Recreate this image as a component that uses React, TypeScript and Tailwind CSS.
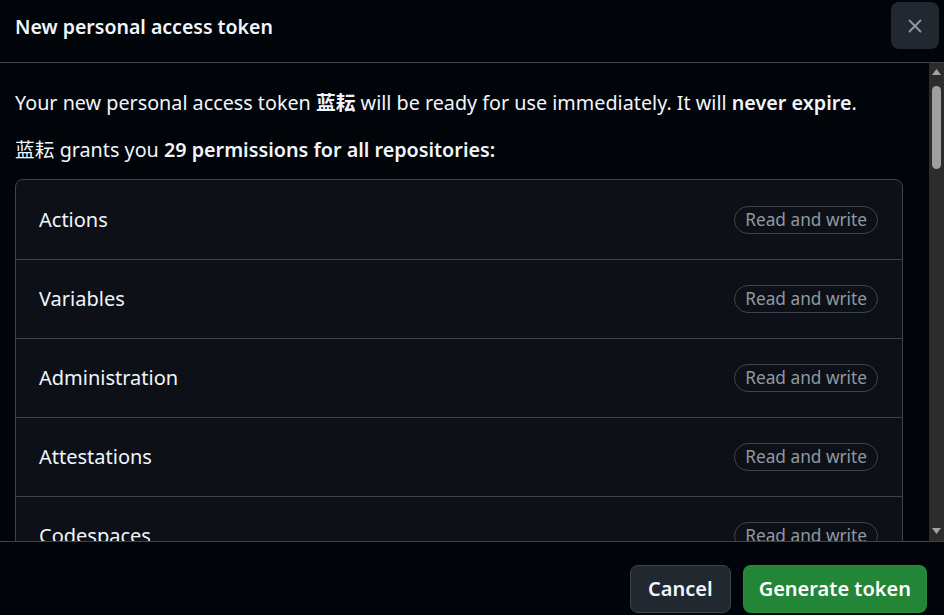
import { X } from "lucide-react"

const permissions = ["Actions", "Variables", "Administration", "Attestations", "Codespaces", "Commit statuses"]

export default function App() {
  return (
    <div
      className="flex h-[615px] w-[944px] flex-col overflow-hidden bg-[#010409] text-[#f0f6fc]"
      style={{ fontFamily: '"Noto Sans", "Noto Sans CJK SC", sans-serif' }}
    >
      <header className="flex h-[63px] shrink-0 items-start justify-between border-b border-[#3d444d] pl-[15px] pr-[5px]">
        <h1 className="mt-[13px] text-[19.5px] font-semibold leading-[28px]">New personal access token</h1>
        <button className="mt-[2px] flex h-[47px] w-[48px] items-center justify-center rounded-[8px] bg-[#212830] text-[#9198a1]">
          <X size={22} strokeWidth={2} />
        </button>
      </header>

      <div className="flex min-h-0 flex-1">
        <div className="min-w-0 flex-1 overflow-hidden pl-[15px] pr-[26px]">
          <p className="mt-[26px] text-[19.75px] leading-[28px]">
            Your new personal access token <b className="font-semibold">蓝耘</b> will be ready for use immediately. It
            will <b className="font-semibold">never expire</b>.
          </p>
          <p className="mt-[19px] text-[19.75px] leading-[28px]">
            蓝耘 grants you <b className="font-semibold">29 permissions for all repositories:</b>
          </p>
          <ul className="mt-[15px] overflow-hidden rounded-[8px] border border-[#3d444d] bg-[#0d1117]">
            {permissions.map((name, i) => (
              <li
                key={name}
                className={`flex h-[79px] items-center justify-between pl-[23px] pr-[24px] ${i > 0 ? "border-t border-[#3d444d]" : ""}`}
              >
                <span className="text-[20px]">{name}</span>
                <span className="rounded-full border border-[#3d444d] px-[10px] text-[17.25px] leading-[26px] text-[#9198a1]">
                  Read and write
                </span>
              </li>
            ))}
          </ul>
        </div>
        <div className="relative flex w-[15px] shrink-0 flex-col items-center bg-[#2c2c2c]">
          <svg width="9" height="6" viewBox="0 0 9 6" className="mt-[6px] fill-[#a3a3a3]">
            <path d="M4.5 0 9 6H0z" />
          </svg>
          <div className="mt-[11px] h-[83px] w-[9px] rounded-full bg-[#9f9f9f]" />
          <div className="flex-1" />
          <svg width="9" height="6" viewBox="0 0 9 6" className="mb-[7px] fill-[#a3a3a3]">
            <path d="M0 0h9L4.5 6z" />
          </svg>
        </div>
      </div>

      <footer className="flex h-[74px] shrink-0 items-start justify-end gap-[12px] border-t border-[#3d444d] pr-[17px] pt-[23px]">
        <button className="h-[48px] rounded-[8px] border border-[#3d444d] bg-[#212830] px-[17px] text-[20px] font-semibold">
          Cancel
        </button>
        <button className="h-[48px] rounded-[8px] border border-[#2ea043]/40 bg-[#238636] px-[15px] text-[20px] font-semibold text-white">
          Generate token
        </button>
      </footer>
    </div>
  )
}
